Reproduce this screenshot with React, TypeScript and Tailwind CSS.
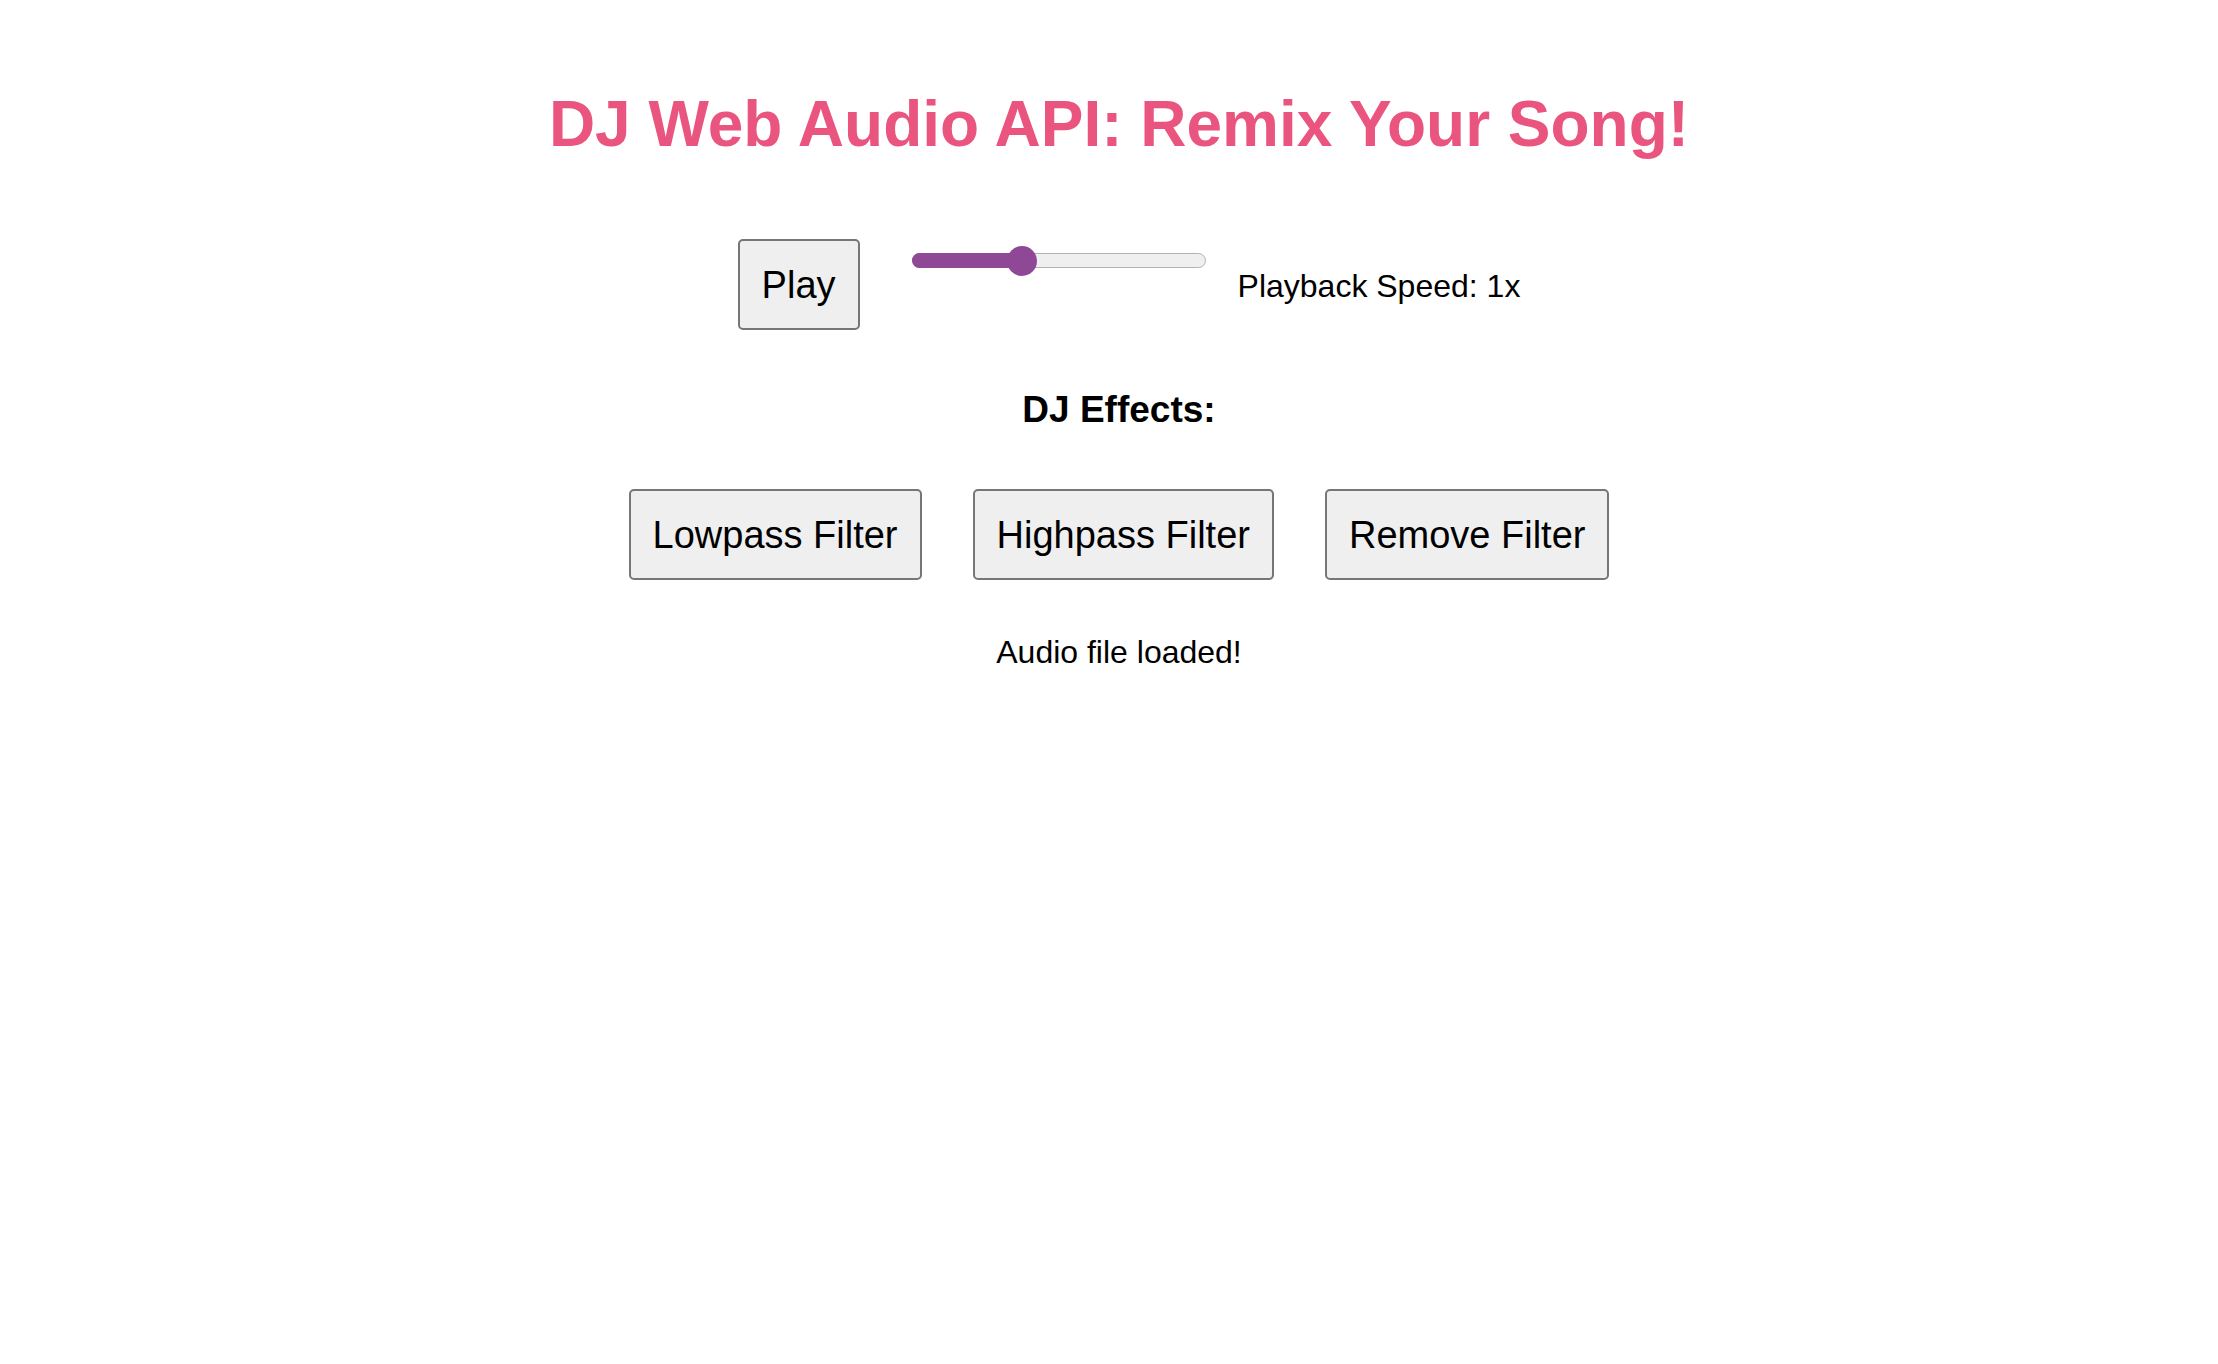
import { useState } from "react";

const filters = ["Lowpass Filter", "Highpass Filter", "Remove Filter"];

function Btn({ label, onClick }: { label: string; onClick?: () => void }) {
  return (
    <button
      onClick={onClick}
      className="h-[91px] flex items-center px-[22px] rounded-[5px] border-2 border-[#767676] bg-[#efefef] text-[38px] leading-[44px] text-black"
    >
      {label}
    </button>
  );
}

export default function App() {
  const [status, setStatus] = useState("Audio file loaded!");
  const speed = 1;

  return (
    <div className="min-h-screen bg-white font-['Liberation_Sans',Arial,sans-serif] text-black pl-[20px] pt-[87px]">
      <h1 className="text-center text-[64px] leading-[74px] font-bold text-[#e9557f]">
        DJ Web Audio API: Remix Your Song!
      </h1>

      <div className="mt-[78px] flex justify-center items-start pl-[20px]">
        <Btn label="Play" onClick={() => setStatus("Playing...")} />
        <div className="relative ml-[52px] mt-[7px] h-[30px] w-[294px]">
          <div className="absolute left-0 right-0 top-[7px] h-[15px] rounded-full border border-[#b2b2b2] bg-[#efefef]" />
          <div className="absolute left-0 top-[7px] h-[15px] w-[110px] rounded-full bg-[#8e4896]" />
          <div className="absolute left-[95px] top-0 h-[30px] w-[30px] rounded-full bg-[#8e4896]" />
        </div>
        <span className="ml-[32px] mt-[29px] text-[32px] leading-[37px]">
          Playback Speed: {speed}x
        </span>
      </div>

      <h3 className="mt-[58px] text-center text-[37px] leading-[43px] font-bold">DJ Effects:</h3>

      <div className="mt-[58px] flex justify-center gap-[51px]">
        {filters.map((f) => (
          <Btn key={f} label={f} onClick={() => setStatus(f + " applied!")} />
        ))}
      </div>

      <p className="mt-[54px] text-center text-[32px] leading-[37px]">{status}</p>
    </div>
  );
}
